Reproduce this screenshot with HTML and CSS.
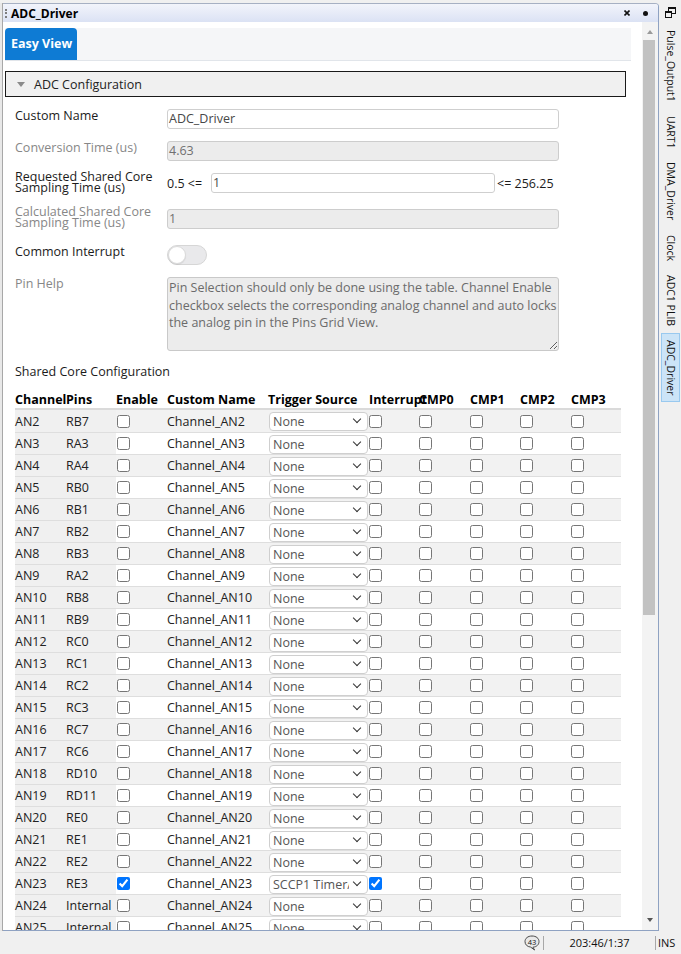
FILE: index.html
```html
<!DOCTYPE html>
<html>
<head>
<meta charset="utf-8">
<title>ADC_Driver</title>
<link rel="stylesheet" href="styles.css">
</head>
<body>
<div class="app">
  <div class="main">
    <div class="leftedge"></div>
    <div class="panel">
      <div class="titlebar">
        <span class="grip"></span>
        <span class="title">ADC_Driver</span>
        <svg class="tb-close" width="6" height="6" viewBox="0 0 6 6"><path d="M0.5 0.5 L5.5 5.5 M5.5 0.5 L0.5 5.5" stroke="#111" stroke-width="1.6"/></svg>
        <span class="tb-dot"></span>
      </div>
      <div class="body">
        <div class="content">
          <div class="tabbar"><div class="tab">Easy View</div></div>
          <div class="sect"><span class="tri"></span>ADC Configuration</div>
          <div class="form">
            <div class="row">
              <div class="lbl">Custom Name</div>
              <div class="inp">ADC_Driver</div>
            </div>
            <div class="row">
              <div class="lbl dim">Conversion Time (us)</div>
              <div class="inp dis">4.63</div>
            </div>
            <div class="row r3">
              <div class="lbl two">Requested Shared Core<br>Sampling Time (us)</div>
              <div class="rng"><span class="pre">0.5 &lt;=</span><div class="inp">1</div><span class="suf">&lt;= 256.25</span></div>
            </div>
            <div class="row r4">
              <div class="lbl two dim">Calculated Shared Core<br>Sampling Time (us)</div>
              <div class="inp dis">1</div>
            </div>
            <div class="row">
              <div class="lbl">Common Interrupt</div>
              <div class="toggle"><span class="knob"></span></div>
            </div>
            <div class="row">
              <div class="lbl dim">Pin Help</div>
              <textarea class="ta" readonly wrap="off">Pin Selection should only be done using the table. Channel Enable
checkbox selects the corresponding analog channel and auto locks
the analog pin in the Pins Grid View.</textarea>
            </div>
          </div>
          <div class="subhead">Shared Core Configuration</div>
          <div class="tbl">
            <div class="th">
              <span>Channel</span><span>Pins</span><span>Enable</span><span>Custom Name</span><span>Trigger Source</span><span>Interrupt</span><span>CMP0</span><span>CMP1</span><span>CMP2</span><span>CMP3</span>
            </div>
            <div class="tbody">
              <div class="tr"><span class="c k">AN2</span><span class="c k">RB7</span><span class="c en"><input type="checkbox"></span><span class="c">Channel_AN2</span><span class="c ts"><span class="sel"><span class="v">None</span></span></span><span class="c"><input type="checkbox"></span><span class="c"><input type="checkbox"></span><span class="c"><input type="checkbox"></span><span class="c"><input type="checkbox"></span><span class="c"><input type="checkbox"></span></div>
              <div class="tr"><span class="c k">AN3</span><span class="c k">RA3</span><span class="c en"><input type="checkbox"></span><span class="c">Channel_AN3</span><span class="c ts"><span class="sel"><span class="v">None</span></span></span><span class="c"><input type="checkbox"></span><span class="c"><input type="checkbox"></span><span class="c"><input type="checkbox"></span><span class="c"><input type="checkbox"></span><span class="c"><input type="checkbox"></span></div>
              <div class="tr"><span class="c k">AN4</span><span class="c k">RA4</span><span class="c en"><input type="checkbox"></span><span class="c">Channel_AN4</span><span class="c ts"><span class="sel"><span class="v">None</span></span></span><span class="c"><input type="checkbox"></span><span class="c"><input type="checkbox"></span><span class="c"><input type="checkbox"></span><span class="c"><input type="checkbox"></span><span class="c"><input type="checkbox"></span></div>
              <div class="tr"><span class="c k">AN5</span><span class="c k">RB0</span><span class="c en"><input type="checkbox"></span><span class="c">Channel_AN5</span><span class="c ts"><span class="sel"><span class="v">None</span></span></span><span class="c"><input type="checkbox"></span><span class="c"><input type="checkbox"></span><span class="c"><input type="checkbox"></span><span class="c"><input type="checkbox"></span><span class="c"><input type="checkbox"></span></div>
              <div class="tr"><span class="c k">AN6</span><span class="c k">RB1</span><span class="c en"><input type="checkbox"></span><span class="c">Channel_AN6</span><span class="c ts"><span class="sel"><span class="v">None</span></span></span><span class="c"><input type="checkbox"></span><span class="c"><input type="checkbox"></span><span class="c"><input type="checkbox"></span><span class="c"><input type="checkbox"></span><span class="c"><input type="checkbox"></span></div>
              <div class="tr"><span class="c k">AN7</span><span class="c k">RB2</span><span class="c en"><input type="checkbox"></span><span class="c">Channel_AN7</span><span class="c ts"><span class="sel"><span class="v">None</span></span></span><span class="c"><input type="checkbox"></span><span class="c"><input type="checkbox"></span><span class="c"><input type="checkbox"></span><span class="c"><input type="checkbox"></span><span class="c"><input type="checkbox"></span></div>
              <div class="tr"><span class="c k">AN8</span><span class="c k">RB3</span><span class="c en"><input type="checkbox"></span><span class="c">Channel_AN8</span><span class="c ts"><span class="sel"><span class="v">None</span></span></span><span class="c"><input type="checkbox"></span><span class="c"><input type="checkbox"></span><span class="c"><input type="checkbox"></span><span class="c"><input type="checkbox"></span><span class="c"><input type="checkbox"></span></div>
              <div class="tr"><span class="c k">AN9</span><span class="c k">RA2</span><span class="c en"><input type="checkbox"></span><span class="c">Channel_AN9</span><span class="c ts"><span class="sel"><span class="v">None</span></span></span><span class="c"><input type="checkbox"></span><span class="c"><input type="checkbox"></span><span class="c"><input type="checkbox"></span><span class="c"><input type="checkbox"></span><span class="c"><input type="checkbox"></span></div>
              <div class="tr"><span class="c k">AN10</span><span class="c k">RB8</span><span class="c en"><input type="checkbox"></span><span class="c">Channel_AN10</span><span class="c ts"><span class="sel"><span class="v">None</span></span></span><span class="c"><input type="checkbox"></span><span class="c"><input type="checkbox"></span><span class="c"><input type="checkbox"></span><span class="c"><input type="checkbox"></span><span class="c"><input type="checkbox"></span></div>
              <div class="tr"><span class="c k">AN11</span><span class="c k">RB9</span><span class="c en"><input type="checkbox"></span><span class="c">Channel_AN11</span><span class="c ts"><span class="sel"><span class="v">None</span></span></span><span class="c"><input type="checkbox"></span><span class="c"><input type="checkbox"></span><span class="c"><input type="checkbox"></span><span class="c"><input type="checkbox"></span><span class="c"><input type="checkbox"></span></div>
              <div class="tr"><span class="c k">AN12</span><span class="c k">RC0</span><span class="c en"><input type="checkbox"></span><span class="c">Channel_AN12</span><span class="c ts"><span class="sel"><span class="v">None</span></span></span><span class="c"><input type="checkbox"></span><span class="c"><input type="checkbox"></span><span class="c"><input type="checkbox"></span><span class="c"><input type="checkbox"></span><span class="c"><input type="checkbox"></span></div>
              <div class="tr"><span class="c k">AN13</span><span class="c k">RC1</span><span class="c en"><input type="checkbox"></span><span class="c">Channel_AN13</span><span class="c ts"><span class="sel"><span class="v">None</span></span></span><span class="c"><input type="checkbox"></span><span class="c"><input type="checkbox"></span><span class="c"><input type="checkbox"></span><span class="c"><input type="checkbox"></span><span class="c"><input type="checkbox"></span></div>
              <div class="tr"><span class="c k">AN14</span><span class="c k">RC2</span><span class="c en"><input type="checkbox"></span><span class="c">Channel_AN14</span><span class="c ts"><span class="sel"><span class="v">None</span></span></span><span class="c"><input type="checkbox"></span><span class="c"><input type="checkbox"></span><span class="c"><input type="checkbox"></span><span class="c"><input type="checkbox"></span><span class="c"><input type="checkbox"></span></div>
              <div class="tr"><span class="c k">AN15</span><span class="c k">RC3</span><span class="c en"><input type="checkbox"></span><span class="c">Channel_AN15</span><span class="c ts"><span class="sel"><span class="v">None</span></span></span><span class="c"><input type="checkbox"></span><span class="c"><input type="checkbox"></span><span class="c"><input type="checkbox"></span><span class="c"><input type="checkbox"></span><span class="c"><input type="checkbox"></span></div>
              <div class="tr"><span class="c k">AN16</span><span class="c k">RC7</span><span class="c en"><input type="checkbox"></span><span class="c">Channel_AN16</span><span class="c ts"><span class="sel"><span class="v">None</span></span></span><span class="c"><input type="checkbox"></span><span class="c"><input type="checkbox"></span><span class="c"><input type="checkbox"></span><span class="c"><input type="checkbox"></span><span class="c"><input type="checkbox"></span></div>
              <div class="tr"><span class="c k">AN17</span><span class="c k">RC6</span><span class="c en"><input type="checkbox"></span><span class="c">Channel_AN17</span><span class="c ts"><span class="sel"><span class="v">None</span></span></span><span class="c"><input type="checkbox"></span><span class="c"><input type="checkbox"></span><span class="c"><input type="checkbox"></span><span class="c"><input type="checkbox"></span><span class="c"><input type="checkbox"></span></div>
              <div class="tr"><span class="c k">AN18</span><span class="c k">RD10</span><span class="c en"><input type="checkbox"></span><span class="c">Channel_AN18</span><span class="c ts"><span class="sel"><span class="v">None</span></span></span><span class="c"><input type="checkbox"></span><span class="c"><input type="checkbox"></span><span class="c"><input type="checkbox"></span><span class="c"><input type="checkbox"></span><span class="c"><input type="checkbox"></span></div>
              <div class="tr"><span class="c k">AN19</span><span class="c k">RD11</span><span class="c en"><input type="checkbox"></span><span class="c">Channel_AN19</span><span class="c ts"><span class="sel"><span class="v">None</span></span></span><span class="c"><input type="checkbox"></span><span class="c"><input type="checkbox"></span><span class="c"><input type="checkbox"></span><span class="c"><input type="checkbox"></span><span class="c"><input type="checkbox"></span></div>
              <div class="tr"><span class="c k">AN20</span><span class="c k">RE0</span><span class="c en"><input type="checkbox"></span><span class="c">Channel_AN20</span><span class="c ts"><span class="sel"><span class="v">None</span></span></span><span class="c"><input type="checkbox"></span><span class="c"><input type="checkbox"></span><span class="c"><input type="checkbox"></span><span class="c"><input type="checkbox"></span><span class="c"><input type="checkbox"></span></div>
              <div class="tr"><span class="c k">AN21</span><span class="c k">RE1</span><span class="c en"><input type="checkbox"></span><span class="c">Channel_AN21</span><span class="c ts"><span class="sel"><span class="v">None</span></span></span><span class="c"><input type="checkbox"></span><span class="c"><input type="checkbox"></span><span class="c"><input type="checkbox"></span><span class="c"><input type="checkbox"></span><span class="c"><input type="checkbox"></span></div>
              <div class="tr"><span class="c k">AN22</span><span class="c k">RE2</span><span class="c en"><input type="checkbox"></span><span class="c">Channel_AN22</span><span class="c ts"><span class="sel"><span class="v">None</span></span></span><span class="c"><input type="checkbox"></span><span class="c"><input type="checkbox"></span><span class="c"><input type="checkbox"></span><span class="c"><input type="checkbox"></span><span class="c"><input type="checkbox"></span></div>
              <div class="tr"><span class="c k">AN23</span><span class="c k">RE3</span><span class="c en"><input type="checkbox" checked></span><span class="c">Channel_AN23</span><span class="c ts"><span class="sel"><span class="v">SCCP1 Timer/Counter</span></span></span><span class="c"><input type="checkbox" checked></span><span class="c"><input type="checkbox"></span><span class="c"><input type="checkbox"></span><span class="c"><input type="checkbox"></span><span class="c"><input type="checkbox"></span></div>
              <div class="tr"><span class="c k">AN24</span><span class="c k">Internal</span><span class="c en"><input type="checkbox"></span><span class="c">Channel_AN24</span><span class="c ts"><span class="sel"><span class="v">None</span></span></span><span class="c"><input type="checkbox"></span><span class="c"><input type="checkbox"></span><span class="c"><input type="checkbox"></span><span class="c"><input type="checkbox"></span><span class="c"><input type="checkbox"></span></div>
              <div class="tr"><span class="c k">AN25</span><span class="c k">Internal</span><span class="c en"><input type="checkbox"></span><span class="c">Channel_AN25</span><span class="c ts"><span class="sel"><span class="v">None</span></span></span><span class="c"><input type="checkbox"></span><span class="c"><input type="checkbox"></span><span class="c"><input type="checkbox"></span><span class="c"><input type="checkbox"></span><span class="c"><input type="checkbox"></span></div>
            </div>
          </div>
        </div>
        <div class="vscroll">
          <span class="arr-up"></span>
          <span class="thumb"></span>
          <span class="arr-down"></span>
        </div>
      </div>
    </div>
  </div>
  <div class="side">
    <svg class="side-icon" width="11" height="11" viewBox="0 0 11 11"><rect x="3.5" y="0.5" width="7" height="6" fill="none" stroke="#111"/><line x1="3.5" y1="1.5" x2="10.5" y2="1.5" stroke="#111"/><rect x="0.5" y="4.5" width="6" height="6" fill="#f0f0f0" stroke="#111"/><line x1="0.5" y1="5.5" x2="6.5" y2="5.5" stroke="#111"/></svg>
    <div class="stabs">
      <div class="stab">Pulse_Output1</div>
      <div class="stab">UART1</div>
      <div class="stab">DMA_Driver</div>
      <div class="stab">Clock</div>
      <div class="stab">ADC1 PLIB</div>
      <div class="stab on">ADC_Driver</div>
    </div>
  </div>
  <div class="status">
    <svg class="bubble" width="16" height="16" viewBox="0 0 16 16"><path d="M8 1 C12.2 1 15 3.3 15 6.6 C15 9.8 12.4 12 8.9 12.2 L10.6 15 L6.6 12.1 C3.2 11.7 1 9.6 1 6.6 C1 3.3 3.8 1 8 1 Z" fill="#e9e9e9" stroke="#4a4a4a" stroke-width="1"/><text x="8" y="9.6" font-size="7.5" font-family="Open Sans, sans-serif" text-anchor="middle" fill="#111">43</text></svg>
    <span class="sep"></span>
    <span class="pos">203:46/1:37</span>
    <span class="sep"></span>
    <span class="ins">INS</span>
  </div>
</div>
</body>
</html>
```
FILE: styles.css
```css
* { box-sizing: border-box; }
html, body { margin: 0; padding: 0; }
body {
  width: 681px;
  height: 954px;
  overflow: hidden;
  background: #f0f0f0;
  font-family: "Open Sans", "Noto Sans", sans-serif;
  font-size: 12.5px;
  color: #1e1e1e;
}
.app {
  display: grid;
  grid-template-columns: 659px 22px;
  grid-template-rows: 931px 23px;
  height: 954px;
}
.main { display: flex; padding-top: 3px; min-height: 0; }
.leftedge { width: 3px; flex: none; background: #e8e8e8; border-right: 1px solid #a8a8a8; }
.panel {
  flex: 1;
  min-width: 0;
  display: flex;
  flex-direction: column;
  background: #fff;
  border-top: 1px solid #a6b0c3;
  border-right: 1px solid #8fa2c2;
  border-bottom: 1px solid #8fa2c2;
  border-top-right-radius: 4px;
}
.titlebar {
  height: 18px;
  flex: none;
  display: flex;
  align-items: center;
  background: linear-gradient(#f2f4fb, #dbe2f4);
  border-top-right-radius: 3px;
}
.grip { width: 2px; height: 9px; margin-left: 2px; border-left: 2px dotted #7d7d7d; }
.title { margin-left: 4px; font-weight: 700; font-size: 12px; color: #000; }
.tb-close { margin-left: auto; }
.tb-dot { width: 5px; height: 5px; border-radius: 50%; background: #111; margin-left: 13px; margin-right: 10px; }

.body { flex: 1; display: flex; min-height: 0; }
.content { flex: 1; min-width: 0; overflow: hidden; padding-left: 2px; }

.vscroll {
  width: 16px;
  flex: none;
  background: #f3f3f3;
  display: flex;
  flex-direction: column;
  padding-top: 8px;
  padding-bottom: 8px;
}
.arr-up {
  align-self: center;
  width: 0; height: 0;
  border-left: 3.5px solid transparent;
  border-right: 3.5px solid transparent;
  border-bottom: 4px solid #9a9a9a;
}
.thumb { margin: 6px 0 0 1px; width: 12px; height: 575px; background: #c2c2c2; }
.arr-down {
  margin-top: auto;
  align-self: center;
  width: 0; height: 0;
  border-left: 3.5px solid transparent;
  border-right: 3.5px solid transparent;
  border-top: 4px solid #555;
}

.tabbar {
  margin: 6px 11px 0 0;
  height: 33px;
  background: #f5f6f8;
  border-bottom: 1px solid #e1e5ea;
  display: flex;
  align-items: flex-end;
}
.tab {
  width: 72px;
  height: 32px;
  background: #0e7bd4;
  color: #fff;
  font-weight: 700;
  font-size: 12.5px;
  border-radius: 4px 4px 0 0;
  padding-left: 6px;
  line-height: 32px;
}

.sect {
  margin: 10px 16px 0 0;
  height: 26px;
  border: 1px solid #1a1a1a;
  background: #f0f0f0;
  display: flex;
  align-items: center;
  font-size: 12.5px;
  color: #222;
}
.tri {
  width: 0; height: 0;
  border-left: 4.5px solid transparent;
  border-right: 4.5px solid transparent;
  border-top: 5px solid #8a8a8a;
  margin-left: 11px;
  margin-right: 9px;
}

.form { padding: 12px 0 0 10px; }
.row { display: flex; align-items: flex-start; margin-bottom: 12px; }
.row:last-child { margin-bottom: 0; }
.row.r3, .row.r4 { margin-bottom: 16px; }
.lbl { width: 152px; flex: none; line-height: 14px; color: #1b1b1b; }
.lbl.dim { color: #878787; }
.lbl.two { line-height: 11px; margin-top: -2px; }
.r4 .lbl.two { margin-top: -3px; }
.inp {
  width: 392px;
  height: 20px;
  border: 1px solid #cfcfcf;
  border-radius: 3px;
  padding: 0 2px 0 1px;
  line-height: 18px;
  color: #474747;
  background: #fff;
  white-space: nowrap;
  overflow: hidden;
}
.inp.dis { background: #ececec; color: #707070; border-color: #cdcdcd; }
.rng { display: flex; align-items: center; height: 20px; color: #1b1b1b; }
.rng .pre { width: 44px; }
.rng .inp { width: 284px; }
.rng .suf { margin-left: 2px; }
.toggle {
  width: 40px;
  height: 20px;
  border-radius: 10px;
  background: #e9e9eb;
  border: 1px solid #d6d6d6;
  display: flex;
  align-items: center;
}
.knob {
  width: 18px;
  height: 18px;
  border-radius: 50%;
  background: #fff;
  border: 1px solid #dadada;
  box-shadow: 0 1px 1px rgba(0,0,0,0.08);
}
.ta {
  display: block;
  margin: 0;
  width: 392px;
  height: 74px;
  background: #ececec;
  border: 1px solid #c9c9c9;
  border-radius: 3px;
  padding: 1px;
  font-family: inherit;
  font-size: 12.5px;
  line-height: 17.5px;
  color: #6b6b6b;
  overflow: hidden;
  resize: both;
  outline: none;
}

.subhead { margin: 12px 0 0 10px; line-height: 18px; color: #1b1b1b; }

.tbl { margin: 9px 0 0 10px; width: 606px; }
.th, .tr {
  display: grid;
  grid-template-columns: 51px 50px 51px 101px 101px 50px 51px 50px 51px 50px;
}
.th {
  height: 20px;
  border-bottom: 2px solid #dadada;
  font-weight: 700;
  color: #000;
  align-items: center;
}
.th span { white-space: nowrap; }
.tr { height: 22px; }
.tr + .tr { border-top: 1px solid #dedede; }
.tbody .tr:nth-child(odd) { background: #f2f2f2; }
.c { display: flex; align-items: center; white-space: nowrap; min-width: 0; color: #222; }
.k { background: #f0f0f0; }
.en { padding-left: 1px; }
input[type=checkbox] { margin: 0; width: 13px; height: 13px; }
.ts { align-items: flex-start; padding: 2px 0 0 1px; }
.sel {
  position: relative;
  display: flex;
  width: 99px;
  height: 19px;
  border: 1px solid #cfcfcf;
  border-radius: 4px;
  background: #fff;
  color: #555;
  padding: 0 18px 0 3px;
  line-height: 17px;
}
.sel .v { flex: 1; min-width: 0; overflow: hidden; white-space: nowrap; }
.sel::after {
  content: "";
  position: absolute;
  right: 7px;
  top: 3px;
  width: 5px;
  height: 5px;
  border-right: 1.5px solid #333;
  border-bottom: 1.5px solid #333;
  transform: rotate(45deg);
}

.side { background: #f0f0f0; display: flex; flex-direction: column; }
.side-icon { margin: 7px 0 0 6px; }
.stabs { margin-top: 5px; display: flex; flex-direction: column; }
.stab {
  writing-mode: vertical-rl;
  margin-left: 2px;
  width: 19px;
  padding: 6px 0 6px;
  border: 1px solid transparent;
  font-size: 10.5px;
  line-height: 17px;
  color: #111;
}
.stab.on { background: #cce4f7; border-color: #99c9ef; }

.status {
  grid-column: 1 / 3;
  display: flex;
  align-items: center;
  justify-content: flex-end;
  padding-right: 4px;
  background: #f0f0f0;
  font-size: 11px;
  color: #111;
}
.bubble { margin-right: 3px; }
.sep { width: 1px; height: 14px; background: #a8a8a8; }
.pos { width: 111px; text-align: center; }
.ins { width: 21px; padding-left: 2px; }
```
